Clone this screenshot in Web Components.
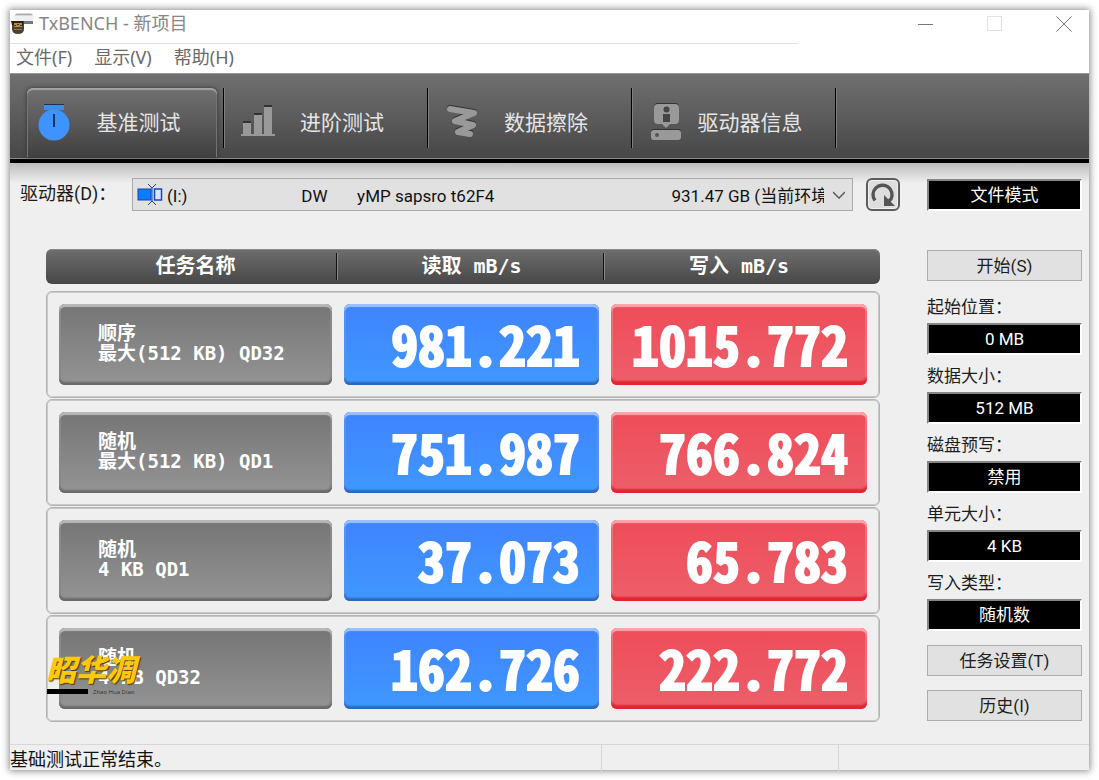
<!DOCTYPE html>
<html lang="zh-CN">
<head>
<meta charset="utf-8">
<title>TxBENCH - 新项目</title>
<style>
  body { margin: 0; background: #fff; color: #1c1c1c; font: 18px/24px "Noto Sans", "Noto Sans CJK SC", sans-serif; }
</style>
</head>
<body>
<tx-window></tx-window>

<script>
const BASE = `*, *::before, *::after { box-sizing: border-box; } button { font: inherit; color: inherit; margin: 0; padding: 0; cursor: pointer; }`;

function define(name, css, html, setup) {
  const tpl = document.createElement("template");
  tpl.innerHTML = `<style>${BASE}${css}</style>${html}`;
  customElements.define(name, class extends HTMLElement {
    constructor() {
      super();
      this.attachShadow({ mode: "open" }).append(tpl.content.cloneNode(true));
    }
    connectedCallback() { if (setup) setup(this, this.shadowRoot); }
  });
}

define("tx-titlebar", `
  :host { display: flex; align-items: flex-start; height: 33px; background: #fff; color: #868686; }
  .logo { flex: none; margin: 1px 5px 0 1px; }
  h1 { margin: 1px 0 0; font-size: 18px; line-height: 24px; font-weight: 400; flex: 1; }
  .ctl { width: 50px; height: 27px; border: 0; background: none; display: grid; place-items: center; }
  .ctl.max { width: 88px; }
`, `
  <svg class="logo" width="23" height="24" viewBox="0 0 23 24" aria-hidden="true">
    <path d="M6 2h14l2 3H3z" fill="#d9d9d9"/><path d="M3 5h19v7H5z" fill="#f0f0f0"/>
    <path d="M5 3h16l1 1H4z" fill="#aaa"/><path d="M10 10h12v3H11z" fill="#777"/><path d="M18 11h2v1h-2z" fill="#58c"/>
    <path d="M1 12h12v6q0 5-6 5t-6-5z" fill="#4a4236"/><path d="M0 10h13l-1 4H1z" fill="#26221c"/>
    <path d="M3 12h8v4H3z" fill="#b98b3c"/><path d="M3 14h2v1H3zM6 13h2v1H6zM9 14h2v1H9z" fill="#40341f"/>
    <path d="M3 18h8v1H3z" fill="#8a7a58"/>
  </svg>
  <h1>TxBENCH - 新项目</h1>
  <button class="ctl" aria-label="最小化"><svg width="16" height="16"><path d="M0 8.500h15" stroke="#777"/></svg></button>
  <button class="ctl max" aria-label="最大化"><svg width="16" height="16"><rect x=".5" y=".5" width="14" height="14" fill="none" stroke="#e2e2e2"/></svg></button>
  <button class="ctl" aria-label="关闭"><svg width="16" height="16"><path d="M.5.5l15 15M15.500.5l-15 15" stroke="#777"/></svg></button>
`);

define("tx-menubar", `
  :host { display: flex; gap: 22px; height: 30px; padding: 2px 6px 0; background: #fff; color: #6a6a6a; position: relative; }
  :host::before { content: ""; position: absolute; top: 0; left: 0; width: 73%; height: 1px; background: #dedede; }
  button { border: 0; background: none; height: 24px; line-height: 24px; }
`, `<button>文件(F)</button><button>显示(V)</button><button>帮助(H)</button>`);

define("tx-tab", `
  :host { display: block; width: 204px; height: 60px; border-right: 1px solid #000; box-shadow: 1px 0 #808080; }
  button { display: flex; align-items: center; width: 100%; height: 100%; padding: 8px 18px 0 17px; border: 0; background: none;
    color: #e6e6e6; font-size: 21px; line-height: 28px; }
  :host([selected]) button { margin-left: 7px; width: 190px; height: 69px; padding: 0 11px 2px 10px; border-radius: 6px 6px 0 0;
    background: linear-gradient(#717171, #5c5c5c 45%, #404040); box-shadow: inset 0 2px 1px #a4a4a4, inset 1px 0 #707070, inset -1px 0 #707070, 0 0 4px #333; }
  span { flex: 1; text-align: center; }
  ::slotted(svg) { flex: none; width: 34px; height: 38px; }
`, `<button role="tab"><slot name="icon"></slot><span><slot></slot></span></button>`);

define("tx-toolbar", `
  :host { display: flex; height: 90px; padding: 14px 10px 0; background: linear-gradient(#707070, #474747 84px, #8c8c8c 84px, #8c8c8c 85px, #000 85px); border-top: 1px solid #999; }
`, `
  <tx-tab selected>
    <svg slot="icon" viewBox="0 0 34 38" aria-hidden="true"><path d="M7 1h20v6h-6v4h-8V7H7z" fill="#3b8cf5"/><path d="M7 1h20v1H7z" fill="#1c3250"/><circle cx="17" cy="22" r="15.500" fill="#3f93ff"/><path d="M17 11v13" stroke="#1b3357" stroke-width="2"/></svg>基准测试</tx-tab>
  <tx-tab>
    <svg slot="icon" viewBox="0 0 34 38" aria-hidden="true"><path d="M2 18h8v2H2zM13 10h8v2h-8zM23 2h8v2h-8z" fill="#333"/><path d="M0 31h34v2H0zM2 20h8v12H2zM13 12h8v20h-8zM23 4h8v28h-8z" fill="#999"/></svg>进阶测试</tx-tab>
  <tx-tab>
    <svg slot="icon" viewBox="0 0 34 38" aria-hidden="true"><g fill="none" stroke-linecap="round" stroke-linejoin="round" stroke-width="6"><path d="M5 5l24 4-19 8 18 4-15 7 12 2" stroke="#333"/><path d="M5 6l24 4-19 8 18 4-15 7 12 2" stroke="#999"/></g></svg>数据擦除</tx-tab>
  <tx-tab>
    <svg slot="icon" viewBox="0 0 34 38" aria-hidden="true"><rect x="5" width="25" height="20" rx="4" fill="#333"/><path d="M9 1h17q4 0 4 4v12q0 4-4 4h-5l-4 4-4-4H9q-4 0-4-4V5q0-4 4-4z" fill="#999"/><circle cx="17.500" cy="6.500" r="3" fill="#444"/><path d="M14 11h7v8h-7z" fill="#444"/><rect x="2" y="26" width="30" height="10" rx="3" fill="#333"/><rect x="2" y="27" width="30" height="10" rx="3" fill="#999"/><circle cx="8" cy="32" r="2" fill="#555"/></svg>驱动器信息</tx-tab>
`);

define("tx-drive", `
  :host { display: flex; align-items: flex-start; font: 18px/32px Roboto, "Noto Sans CJK SC", sans-serif; }
  label { width: 112px; line-height: 32px; }
  .box { flex: 1; min-width: 0; display: flex; align-items: center; height: 33px; padding-left: 4px; border: 1px solid #a9a9a9; background: #e1e1e1; }
  svg { flex: none; display: block; }
  select { flex: 1; min-width: 0; height: 31px; margin: 0; border: 0; padding: 2px 28px 0 4px; color: #111; appearance: none; font: 17px/24px Roboto, "Noto Sans CJK SC", sans-serif;
    background: url("data:image/svg+xml,%3Csvg xmlns='http://www.w3.org/2000/svg' width='12' height='8'%3E%3Cpath d='M0 1l6 6 6-6' fill='none' stroke='%23555' stroke-width='1.300'/%3E%3C/svg%3E") no-repeat right 7px center; }
  button { width: 34px; height: 33px; margin-left: 13px; border: 2px solid #5c5c5c; border-radius: 6px; background: #dedede; box-shadow: inset 0 0 0 1px #f2f2f2; display: grid; place-items: center; }
`, `
  <label for="drive">驱动器(D)：</label>
  <div class="box">
    <svg width="26" height="24" viewBox="0 0 26 24" aria-hidden="true"><rect x="1" y="6" width="13" height="11" fill="#0a7cff" stroke="#1746a8"/><rect x="17.500" y="6" width="7" height="11" fill="#d7e7ff" stroke="#1746c8" stroke-width="1.500"/><path d="M11 1l4 4 4-4M11 22l4-4 4 4M15 5v13" fill="none" stroke="#1746a8"/></svg>
    <select id="drive"></select>
  </div>
  <button aria-label="刷新"><svg width="26" height="26" viewBox="0 0 26 26"><path d="M5 18.500A9.500 9.500 0 1 1 21 17l-2 2" fill="none" stroke="#555" stroke-width="3.400"/><path d="M14 13v11h11z" fill="#555"/></svg></button>
`, (host, root) => {
  const gap = n => "\u00a0".repeat(n);
  root.querySelector("select").add(new Option("(I:)" + gap(27) + "DW" + gap(7) + "yMP sapsro t62F4" + gap(42) + "931.47 GB (当前环境)"));
});

define("tx-results", `
  :host { display: block; position: relative; }
  table { display: block; width: 100%; }
  thead, tbody { display: block; }
  tr { display: grid; grid-template-columns: 273fr 255fr 256fr; column-gap: 12px; padding: 12px; border: 1px solid #b4b4b4; border-radius: 6px; box-shadow: inset 0 0 0 1px #c8c8c8; margin-bottom: 1px; }
  th, td { padding: 0; min-width: 0; }
  thead tr { margin-bottom: 7px; padding: 0 13px; height: 35px; border: 0; box-shadow: inset 0 1px #8a8a8a; background: linear-gradient(#6e6e6e, #474747); }
  thead th { color: #fff; font: 700 20px/35px "DejaVu Sans Mono", "Noto Sans CJK SC", monospace; position: relative; }
  thead th + th::before { content: ""; position: absolute; left: -8px; top: 4px; width: 1px; height: 27px; background: #111; box-shadow: 1px 0 #888; }
  tbody th, tbody td { height: 81px; border-radius: 6px; color: #fff; }
  tbody th { display: flex; flex-direction: column; justify-content: center; padding: 0 0 4px 39px; text-align: left; font: 700 19px/20px "DejaVu Sans Mono", "Noto Sans CJK SC", monospace;
    background: linear-gradient(#757575, #949494); box-shadow: inset 0 3px 1px #b8b8b8, inset 0 -3px 2px #6a6a6a, inset 0 0 0 2px #8c8c8c; }
  td { padding: 0 19px 0 0; text-align: right; font: 700 54px/78px "Noto Sans Mono CJK SC", "Liberation Mono", monospace; -webkit-text-stroke: 2px #fff; }
  .read { background: linear-gradient(#3f83ff, #4098ff); box-shadow: inset 0 3px 1px #9cc0fc, inset 0 -3px 2px #2e68b4, inset 0 0 0 2px #5c96f0; }
  .write { background: linear-gradient(#ef4c59, #ec5f6a); box-shadow: inset 0 3px 1px #f8a5ac, inset 0 -4px 2px #e02530, inset 0 0 0 2px #f07680; }
  .mark { position: absolute; left: 0; bottom: 28px; width: 96px; }
  .mark b { display: block; margin-bottom: 4px; font: italic 900 30px/34px "Noto Sans CJK SC", sans-serif; color: #ffc90a; text-shadow: 1px 1px 1px #4a3500; white-space: nowrap; }
  .mark div { display: flex; align-items: center; gap: 5px; height: 5px; padding-left: 1px; }
  .mark i { width: 41px; height: 5px; background: #000; }
  .mark small { font: 6px/6px "Open Sans", sans-serif; color: #333; white-space: nowrap; }
`, `
  <table>
    <thead><tr><th scope="col">任务名称</th><th scope="col">读取 mB/s</th><th scope="col">写入 mB/s</th></tr></thead>
    <tbody></tbody>
  </table>
  <div class="mark"><b>昭华凋</b><div><i></i><small>Zhao Hua Diao</small></div></div>
`, (host, root) => {
  const rows = [
    ["顺序", "最大(512 KB) QD32", "981.221", "1015.772"],
    ["随机", "最大(512 KB) QD1", "751.987", "766.824"],
    ["随机", "4 KB QD1", "37.073", "65.783"],
    ["随机", "4 KB QD32", "162.726", "222.772"]
  ];
  root.querySelector("tbody").innerHTML = rows.map(([kind, size, read, write]) =>
    `<tr><th scope="row"><span>${kind}</span><span>${size}</span></th><td class="read">${read}</td><td class="write">${write}</td></tr>`).join("");
});

define("tx-button", `
  :host { display: block; }
  button { display: block; width: 100%; height: 31px; border: 1px solid #adadad; background: #e1e1e1; line-height: 31px; }
`, `<button><slot></slot></button>`);

define("tx-value", `
  :host { display: block; }
  label { display: block; padding: 11px 0 6px; line-height: 20px; }
  label[hidden] { display: none; }
  button { display: block; width: 100%; height: 32px; border: 2px solid; border-color: #858585 #fff #fff #858585; background: #000; color: #fff; line-height: 28px; }
`, `<label for="v"></label><button id="v"><slot></slot></button>`, (host, root) => {
  const label = root.querySelector("label"), text = host.getAttribute("label");
  label.hidden = !text;
  label.textContent = text ? text + "：" : "";
});

define("tx-sidebar", `
  :host { display: block; font: 17px/24px Roboto, "Noto Sans CJK SC", sans-serif; }
  .mode { margin: 1px 0 39px; }
  .start { margin-bottom: 5px; }
  .tasks, .history { margin-top: 14px; }
`, `
  <tx-value class="mode">文件模式</tx-value>
  <tx-button class="start">开始(S)</tx-button>
  <tx-value label="起始位置">0 MB</tx-value>
  <tx-value label="数据大小">512 MB</tx-value>
  <tx-value label="磁盘预写">禁用</tx-value>
  <tx-value label="单元大小">4 KB</tx-value>
  <tx-value label="写入类型">随机数</tx-value>
  <tx-button class="tasks">任务设置(T)</tx-button>
  <tx-button class="history">历史(I)</tx-button>
`);

define("tx-statusbar", `
  :host { display: grid; grid-template-columns: 591fr 237fr 251fr; height: 26px; border-top: 1px solid #d7d7d7; color: #111; }
  span { line-height: 29px; white-space: nowrap; }
  span + span { border-left: 1px solid #d7d7d7; }
`, `<span>基础测试正常结束。</span><span></span><span></span>`);

define("tx-window", `
  :host { display: flex; flex-direction: column; margin: 10px; min-height: calc(100vh - 20px); background: #efefef; box-shadow: 0 0 7px 1px #888; }
  main { flex: 1; display: grid; grid-template-columns: minmax(0, 1fr) 155px; column-gap: 27px; align-items: start; padding: 15px 7px 20px 10px; background: linear-gradient(#bcbcbc, #efefef 20px); }
  tx-results { margin: 38px 20px 0 26px; }
`, `
  <tx-titlebar></tx-titlebar>
  <tx-menubar></tx-menubar>
  <tx-toolbar role="tablist"></tx-toolbar>
  <main>
    <div><tx-drive></tx-drive><tx-results></tx-results></div>
    <tx-sidebar></tx-sidebar>
  </main>
  <tx-statusbar></tx-statusbar>
`);
</script>
</body>
</html>
